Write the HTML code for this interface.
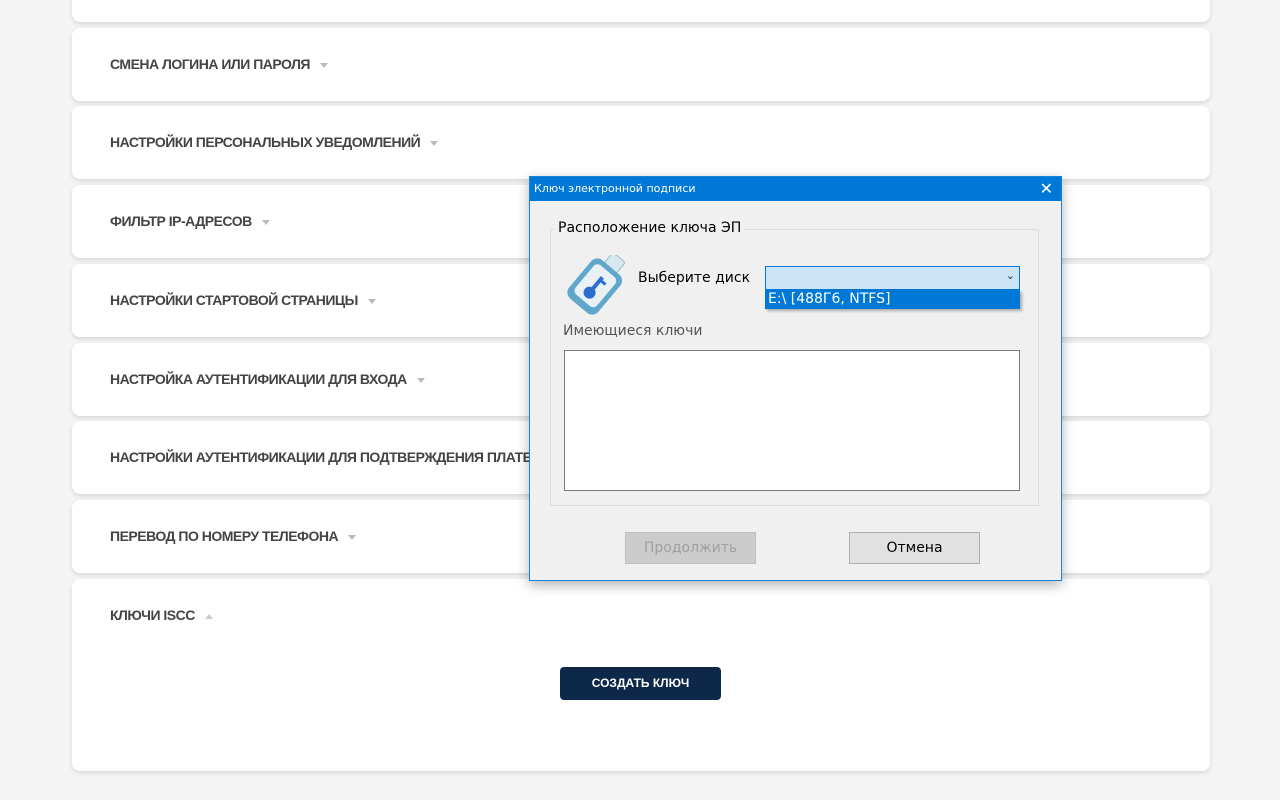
<!DOCTYPE html>
<html><head><style>
body{margin:0;width:1280px;height:800px;background:#f4f4f4;font-family:"Liberation Sans",sans-serif;position:relative;overflow:hidden}
.card{position:absolute;left:72px;width:1138px;background:#fff;border-radius:8px;box-shadow:0 2px 5px rgba(0,0,0,.12)}
.card .t{position:absolute;left:38px;top:28px;font-size:14px;font-weight:bold;color:#444;letter-spacing:-0.5px}
.card .t:after{content:"";display:inline-block;margin-left:10px;border-left:4px solid transparent;border-right:4px solid transparent;border-top:5px solid #bbb;vertical-align:middle}
.card .t.up:after{border-top:0;border-bottom:5px solid #ccc}
.btn{position:absolute;left:488px;top:88px;width:161px;height:33px;background:#0d2848;border-radius:4px;color:#fff;font-size:12px;font-weight:bold;text-align:center;line-height:33px}
.dlg{position:absolute;left:529px;top:176px;width:531px;height:403px;background:#f0f0f0;border:1px solid #1883d7;box-shadow:0 4px 12px rgba(0,0,0,.3);font-family:"DejaVu Sans","Liberation Sans",sans-serif}
.tb{height:24px;background:#0078d7;color:#fff;font-size:11px;line-height:24px;padding-left:4px;position:relative}
.x{position:absolute;right:8px;top:0;font-size:16px}
.gb{position:absolute;left:20px;top:52px;width:487px;height:275px;border:1px solid #dcdcdc}
.gl{position:absolute;left:24px;top:43px;background:#f0f0f0;padding:0 4px;font-size:14px;color:#000}
.w{position:absolute;font-size:14px;color:#000}
.box{position:absolute;background:#fff;border:1px solid #7a7a7a}
.b{position:absolute;top:355px;width:129px;height:30px;border:1px solid #adadad;background:#e1e1e1;text-align:center;line-height:30px;font-size:14px}
</style></head><body>
<div class="card" style="top:-20px;height:42px"></div>
<div class="card" style="top:28px;height:73px"><div class="t">СМЕНА ЛОГИНА ИЛИ ПАРОЛЯ</div></div>
<div class="card" style="top:106px;height:73px"><div class="t">НАСТРОЙКИ ПЕРСОНАЛЬНЫХ УВЕДОМЛЕНИЙ</div></div>
<div class="card" style="top:185px;height:73px"><div class="t">ФИЛЬТР IP-АДРЕСОВ</div></div>
<div class="card" style="top:264px;height:73px"><div class="t">НАСТРОЙКИ СТАРТОВОЙ СТРАНИЦЫ</div></div>
<div class="card" style="top:343px;height:73px"><div class="t">НАСТРОЙКА АУТЕНТИФИКАЦИИ ДЛЯ ВХОДА</div></div>
<div class="card" style="top:421px;height:73px"><div class="t">НАСТРОЙКИ АУТЕНТИФИКАЦИИ ДЛЯ ПОДТВЕРЖДЕНИЯ ПЛАТЕЖЕЙ</div></div>
<div class="card" style="top:500px;height:73px"><div class="t">ПЕРЕВОД ПО НОМЕРУ ТЕЛЕФОНА</div></div>
<div class="card" style="top:579px;height:192px"><div class="t up">КЛЮЧИ ISCC</div><div class="btn">СОЗДАТЬ КЛЮЧ</div></div>

<div class="dlg">
<div class="tb">Ключ электронной подписи<span class="x">✕</span></div>
<div class="gb"></div>
<div class="gl">Расположение ключа ЭП</div>
<svg style="position:absolute;left:34px;top:78px" width="64" height="60" viewBox="0 0 64 60">
<g transform="rotate(40 32 30)"><rect x="24" y="-6" width="16" height="14" rx="2" fill="#d6e8f0" stroke="#9bb" /><rect x="13" y="7" width="38" height="50" rx="8" fill="#5fa8cc"/><rect x="18" y="12" width="28" height="38" rx="5" fill="#e9f1f5"/><circle cx="32" cy="40" r="6" fill="#2a6fd0"/><rect x="30" y="20" width="4" height="18" fill="#2a6fd0"/><rect x="34" y="22" width="5" height="3" fill="#2a6fd0"/></g></svg>
<div class="w" style="left:108px;top:93px">Выберите диск</div>
<div class="box" style="left:235px;top:89px;width:253px;height:22px;background:#cce4f7;border-color:#0078d7"><span style="position:absolute;right:4px;top:2px;font-size:11px;color:#333">⌄</span></div>
<div style="position:absolute;left:235px;top:113px;width:255px;height:19px;background:#0078d7;color:#fff;font-size:14px;line-height:19px;padding-left:3px;box-sizing:border-box;box-shadow:2px 2px 3px rgba(0,0,0,.3)">E:\ [488Г6, NTFS]</div>
<div class="w" style="left:33px;top:146px;color:#555">Имеющиеся ключи</div>
<div class="box" style="left:34px;top:173px;width:454px;height:139px"></div>
<div class="b" style="left:95px;color:#a0a0a0;background:#ccc;border-color:#bfbfbf">Продолжить</div>
<div class="b" style="left:319px">Отмена</div>
</div>
</body></html>
